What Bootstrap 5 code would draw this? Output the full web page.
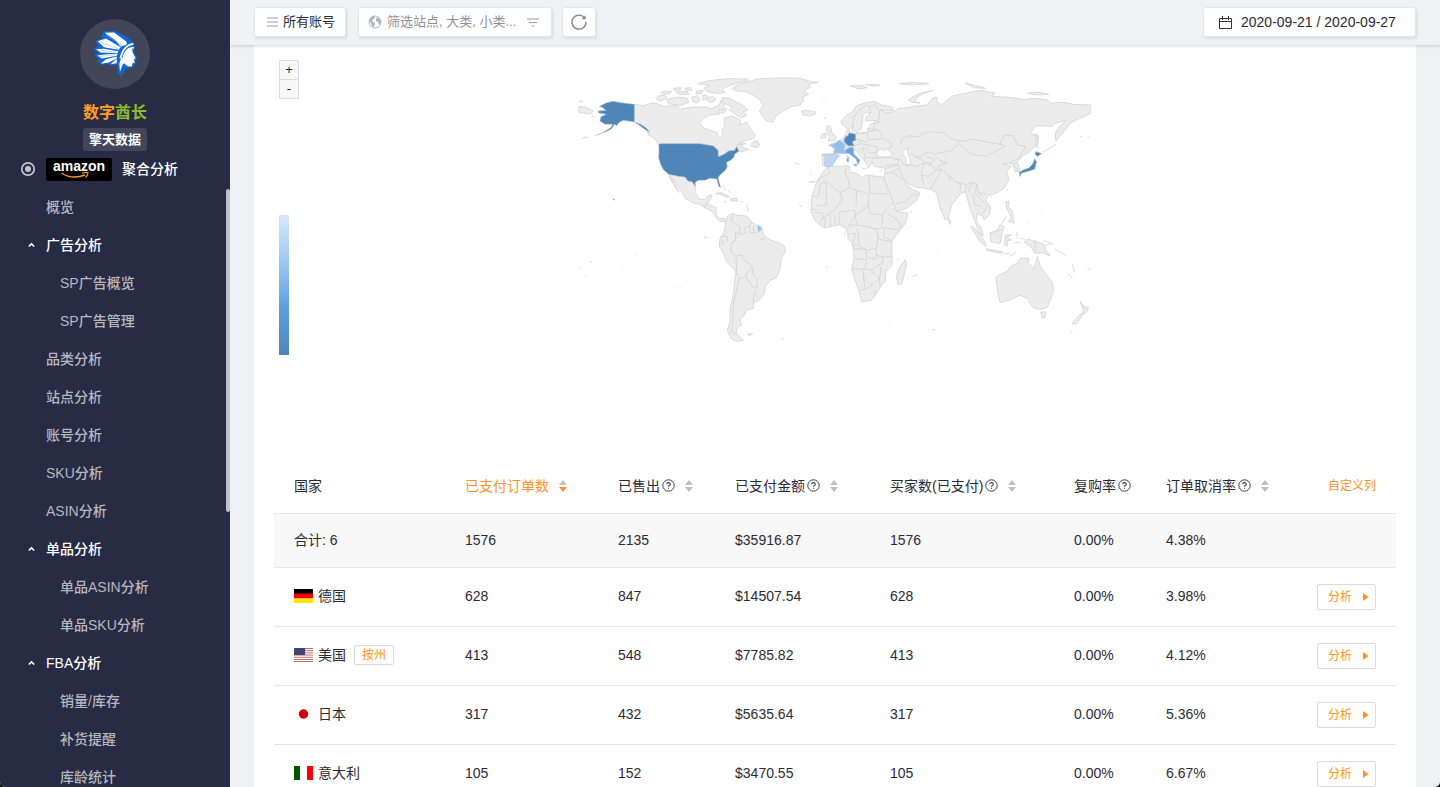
<!DOCTYPE html>
<html lang="zh-CN">
<head>
<meta charset="utf-8">
<meta name="viewport" content="width=device-width, initial-scale=1">
<title>数字酋长</title>
<link href="https://cdn.jsdelivr.net/npm/bootstrap@5.3.0/dist/css/bootstrap.min.css" rel="stylesheet">
<style>
:root{--ink:#2b2b35;--accent:#ff9226;--side:#282b44;--page:#f0f1f5;--line:#e6e6e6}
body{background:#000;color:var(--ink);font-family:"Liberation Sans","Noto Sans CJK SC",sans-serif;font-size:14px;line-height:20px}
.shell{height:100vh;border-radius:0 0 5px 5px;background:var(--page)}
.side{width:230px;background:var(--side)}
.side-scroll{right:0;top:24%;width:4px;height:41%;border-radius:2px;background:#c3c3c7}
.logo{width:70px;height:70px;background:#434559;margin-top:19px}
.brand-name{font-size:16px;line-height:24px;margin-top:12px;color:#ff9f23}
.brand-name span{color:#8fba30}
.tagline{background:#434559;border-radius:3px;line-height:23px;font-size:13px;width:64px;margin-top:3px}
.side nav{margin-top:-1px}
.side .nav-link{height:38px;padding:0 0 0 20px;color:#b7b8bf;font-weight:500;white-space:nowrap}
.side .nav-link.head{color:#fff}
.side .nav-link .ico{width:26px;flex:none;display:flex;align-items:center}
.side .nav-link.sub{padding-left:60px}
.side .nav-link.plain{padding-left:46px}
.amazon{background:#000;border-radius:2px;flex:none;margin-right:10px}
.topbar{height:45px;background:var(--page);padding:0 24px 1px;box-shadow:0 1px 3px rgba(0,0,0,.16);z-index:2}
.tool{height:30px;background:#fff;border:1px solid #e6e6ea;border-radius:3px;color:var(--ink);font-size:13px;line-height:20px;box-shadow:1px 2px 3px rgba(0,0,0,.09)}
.accounts{padding:0 10px 0 12px;margin-right:12px}
.filter{width:194px;padding:0 12px 0 9px;margin-right:10px}
.filter input{border:0;outline:0;background:none;min-width:0;color:#8e8f98;padding:0 0 0 5px;text-overflow:ellipsis}
.filter input::placeholder{color:#8e8f98;opacity:1}
.dates{font-size:14px;width:213px;padding:0 15px;gap:9px}
.sheet{margin:0 24px;padding:0 20px;background:#fff}
.map-panel{height:414px;padding-top:20px}
.map-panel svg{width:530px;height:290px;max-width:100%}
.zoomer{left:5px;top:15px;width:20px}
.zoomer button{height:20px;background:#f7f7f7;border:1px solid #ddd;padding:0;font-size:13px;line-height:18px;color:#222;border-radius:1px}
.zoomer button+button{border-top:0;height:19px}
.scale-bar{left:5px;top:170px;width:10px;height:140px;background:linear-gradient(#d6e9fb,#92c0ee 40%,#5ea0dd 65%,#4f86ba)}
.stats{table-layout:fixed;color:var(--ink);margin:0}
.stats th,.stats td{padding:0 0 0 20px;font-weight:400;border-bottom:1px solid var(--line);background:none;vertical-align:middle;white-space:nowrap;color:var(--ink);box-shadow:none}
.stats tr>:last-child{padding-right:20px;text-align:right}
.stats thead th{height:54px}
.stats .total td{height:54px;background:#f7f7f7}
.stats .data td{height:59px;padding-bottom:2px}
.stats th button{border:0;background:none;padding:0;color:inherit}
.stats th .customize{font-size:12px}
.stats .accent{color:var(--accent)}
.stats .help{margin-left:2px;margin-right:10px}
.outline{border:1px solid #dcdcdc;border-radius:2px;background:#fff;color:var(--accent);font-size:12px;line-height:18px}
.state{padding:0 7px}
.go{width:59px;height:26px;padding:0 6px 0 10px;margin-top:2px}
.flag{width:19px;height:14px;flex:none;margin-right:5px}
</style>
</head>
<body>
<svg width="0" height="0" class="position-absolute" aria-hidden="true">
<symbol id="q" viewBox="0 0 13 13"><circle cx="6.500" cy="6.500" r="5.700" fill="none" stroke="#3d3d47"/><path d="M4.700 5.300Q4.700 3.600 6.500 3.600T8.300 5.200Q8.300 6 7.300 6.500Q6.500 6.900 6.500 7.800M6.500 8.700V9.800" fill="none" stroke="#3d3d47" stroke-width="1.100"/></symbol>
<symbol id="sort" viewBox="0 0 8 12"><path d="M0 5L4 0L8 5Z" fill="#c0c0c4"/><path d="M0 7H8L4 12Z" fill="var(--down,#c0c0c4)"/></symbol>
<symbol id="up" viewBox="0 0 9 6"><path d="M1 5L4.500 1.500L8 5" fill="none" stroke="#fff" stroke-width="2"/></symbol>
<symbol id="play" viewBox="0 0 6 8"><path d="M0 0L5.500 4L0 8Z" fill="#ff9226"/></symbol>
</svg>
<div class="shell d-flex overflow-hidden">
<aside class="side position-relative flex-shrink-0 overflow-hidden">
 <div class="d-flex flex-column align-items-center">
  <div class="logo rounded-circle d-flex align-items-center justify-content-center">
   <svg width="50" height="52" viewBox="270 85 150 155" aria-hidden="true">
    <path d="M308 95L343 93L374 108L399 126L404 140L402 156L412 176L406 182L408 192L400 196L400 204L382 206L374 212L372 224L366 219L362 232L357 220L352 222L352 194L334 198L322 192L300 196L304 187L290 188L296 176L284 168L293 158L280 147L294 138L286 122L303 118Z" fill="#1268cf"/>
    <g fill="#fff"><path d="M314 99L342 98L378 124L382 134L362 140L345 120Z"/><path d="M293 124L318 116L362 142L356 150L312 142Z"/><path d="M288 148L312 147L355 154L352 160L302 158Z"/><path d="M292 167L320 163L353 162L350 168L306 176Z"/><path d="M302 192L318 178L350 170L350 176L326 188Z"/><path d="M332 193L346 180L351 178L350 190Z"/><path d="M382 146L396 144L398 158L407 175L402 178L404 189L397 191L396 199L384 200L372 190L366 198L360 216L358 190L364 174L378 158Z"/></g>
    <path d="M318 105L364 134M300 127L354 146M298 151L348 157M300 170L346 164" stroke="#8fc2f4" stroke-width="2" fill="none"/>
    <path d="M396 127Q365 134 356 176M402 138Q376 138 366 174" stroke="#1268cf" stroke-width="3" fill="none"/>
    <path d="M400 132Q370 136 361 176M402 144Q380 142 370 170" stroke="#fff" stroke-width="5" fill="none"/>
   </svg>
  </div>
  <div class="brand-name fw-bold">数字<span>酋长</span></div>
  <div class="tagline text-white fw-bold text-center">擎天数据</div>
 </div>
 <nav class="nav flex-column flex-nowrap">
  <a href="#" class="nav-link head d-flex align-items-center"><span class="ico"><svg width="16" height="16" viewBox="0 0 16 16"><circle cx="8" cy="8" r="6.200" fill="none" stroke="#c3c4cc" stroke-width="1.700"/><circle cx="8" cy="8" r="3" fill="#c3c4cc"/></svg></span><svg class="amazon" width="66" height="23" viewBox="0 0 66 23"><text x="7" y="13" font-family="Liberation Sans" font-weight="700" font-size="14" fill="#fff">amazon</text><path d="M15.500 15Q26 22 39 17" fill="none" stroke="#f7982a" stroke-width="1.500"/><path d="M36 15.200Q40 13.800 42 14.800Q41.500 18 39.500 19.500" fill="none" stroke="#f7982a" stroke-width="1.200"/></svg>聚合分析</a>
  <a href="#" class="nav-link plain d-flex align-items-center">概览</a>
  <a href="#" class="nav-link head d-flex align-items-center"><span class="ico"><svg class="ms-2" width="7" height="6"><use href="#up"/></svg></span>广告分析</a>
  <a href="#" class="nav-link sub d-flex align-items-center">SP广告概览</a>
  <a href="#" class="nav-link sub d-flex align-items-center">SP广告管理</a>
  <a href="#" class="nav-link plain d-flex align-items-center">品类分析</a>
  <a href="#" class="nav-link plain d-flex align-items-center">站点分析</a>
  <a href="#" class="nav-link plain d-flex align-items-center">账号分析</a>
  <a href="#" class="nav-link plain d-flex align-items-center">SKU分析</a>
  <a href="#" class="nav-link plain d-flex align-items-center">ASIN分析</a>
  <a href="#" class="nav-link head d-flex align-items-center"><span class="ico"><svg class="ms-2" width="7" height="6"><use href="#up"/></svg></span>单品分析</a>
  <a href="#" class="nav-link sub d-flex align-items-center">单品ASIN分析</a>
  <a href="#" class="nav-link sub d-flex align-items-center">单品SKU分析</a>
  <a href="#" class="nav-link head d-flex align-items-center"><span class="ico"><svg class="ms-2" width="7" height="6"><use href="#up"/></svg></span>FBA分析</a>
  <a href="#" class="nav-link sub d-flex align-items-center">销量/库存</a>
  <a href="#" class="nav-link sub d-flex align-items-center">补货提醒</a>
  <a href="#" class="nav-link sub d-flex align-items-center">库龄统计</a>
 </nav>
 <div class="side-scroll position-absolute"></div>
</aside>
<main class="flex-grow-1 overflow-hidden">
 <header class="topbar d-flex align-items-center position-relative">
  <button class="tool accounts d-flex align-items-center"><svg class="me-1" width="12" height="10" viewBox="0 0 12 10"><path d="M0 1H11M0 5H11M0 9H11" stroke="#999aa3"/></svg>所有账号</button>
  <div class="tool filter d-flex align-items-center">
   <svg class="flex-shrink-0" width="14" height="14" viewBox="0 0 14 14"><circle cx="7" cy="7" r="6" fill="#fff" stroke="#b4b5bb"/><path d="M2 3L5 1L7 2L6 4L4 5L5 7L7 8L6 12L4 11L3 8L1 6ZM9 2L12 4L13 8L11 10L10 7L8 6L8 4Z" fill="#b4b5bb"/></svg>
   <input class="flex-grow-1" type="text" aria-label="筛选" placeholder="筛选站点, 大类, 小类...">
   <svg class="flex-shrink-0 ms-2" width="12" height="9" viewBox="0 0 12 9"><path d="M0 1H12M2 4.500H10M4.500 8H7.500" stroke="#999aa3" stroke-width="1.200"/></svg>
  </div>
  <button class="tool px-2 d-flex align-items-center" aria-label="刷新"><svg width="16" height="16" viewBox="0 0 16 16"><path d="M13.800 4.200A7 7 0 1 0 15 8" fill="none" stroke="#85868f" stroke-width="1.400"/><path d="M14.600 1.200V5.200H10.400Z" fill="#85868f"/></svg></button>
  <button class="tool dates d-flex align-items-center ms-auto"><svg width="13" height="13" viewBox="0 0 13 13"><path d="M.500 2.500H12.500V12.500H.500ZM.500 5.500H12.500M3.500 0V4M9.500 0V4" fill="none" stroke="#33333d"/></svg>2020-09-21 / 2020-09-27</button>
 </header>
 <section class="sheet">
  <div class="map-panel position-relative d-flex justify-content-center align-items-start">
   <div class="zoomer position-absolute d-flex flex-column"><button aria-label="放大">+</button><button aria-label="缩小">-</button></div>
   <div class="scale-bar position-absolute"></div>
   <svg viewBox="0 0 1590 870" role="img" aria-label="世界地图" fill="#ececec" stroke="#d4d4d4" stroke-width="2.500" stroke-linejoin="round">
    <!-- North America, Greenland, Iceland -->
    <g>
     <path d="M193 118L222 122L245 114L262 116L280 124L320 122L330 132L372 126L410 126L425 132L432 126L448 120L452 108L470 110L458 132L446 148L420 150L398 160L390 172L396 186L420 196L440 202L448 222L458 212L456 196L464 180L462 160L486 152L512 166L508 180L530 172L545 196L556 208L552 220L520 228L500 242L520 234L514 246L536 252L518 260L507 258L500 245L494 256L476 258L462 268L445 275L444 256L430 243L415 240L390 236L273 236L266 238L250 218L236 210L228 192L212 178L193 171Z"/>
     <path d="M548 232L560 226L570 240L562 248L540 242ZM456 98L480 100L500 112L520 122L534 136L520 140L530 152L512 158L488 142L478 134L488 126L470 118L456 108ZM290 104L320 96L352 100L356 112L330 122L296 116ZM262 94L284 90L290 100L272 108L260 104ZM272 82L286 78L304 80L300 86L280 88ZM310 70L334 68L330 76L312 76ZM318 82L348 78L358 88L330 88ZM344 70L362 68L366 76L350 78ZM384 56L410 48L470 41L530 42L536 47L500 54L472 64L455 76L466 82L440 86L412 80L402 70L418 62ZM366 96L384 92L390 104L380 114L368 110ZM396 90L410 90L412 102L400 106ZM412 98L428 94L438 102L428 112L414 110ZM380 78L400 76L394 86L378 86ZM446 136L470 130L464 142L444 146ZM506 232L528 236L512 240Z"/>
     <path d="M486 70L505 58L540 50L560 42L640 38L690 40L715 48L744 52L716 58L722 66L702 78L715 88L698 96L700 108L690 120L660 126L636 140L620 150L608 172L590 168L576 152L568 138L580 120L562 98L530 80L500 78ZM694 138L710 136L735 140L738 146L718 153L700 150Z"/>
     <path d="M27 124L50 128L70 138L60 148L40 144L27 142ZM27 108L38 109L30 111ZM36 220L54 216M64 152L74 155"/>
     <path d="M296 328L326 334L345 336L354 348L366 350L376 364L378 385L388 402L404 404L414 392L427 390L420 406L408 414L404 428L390 418L370 414L345 400L340 388L330 372L310 344L305 340L328 382L316 366L304 348ZM404 428L412 416L438 428L440 452L448 462L462 460L468 468L450 470L436 455L428 440ZM408 414L418 414M436 386L452 382L478 394L474 398L450 388ZM480 402L500 400L504 408L484 408ZM510 410H518M458 360L466 374M474 378L484 386M530 418L536 440M462 410L470 411"/>
     <path d="M676 294L688 298M718 352L736 350M688 418L694 426M760 110L764 109M766 159L768 160"/>
     <g fill="#4f86ba" stroke="#b7c6d4" stroke-width="1.500">
      <path d="M88 124L110 113L128 109L160 114L193 118L193 171L160 166L148 172L140 182L134 178L124 192L108 200L76 212L100 202L122 188L128 178L105 178L90 168L92 156L108 148L86 144L84 138L108 136L98 128Z"/>
      <path d="M193 171L212 178L228 188L240 202L226 194L210 182Z"/>
      <path d="M273 236L390 236L415 240L430 243L444 256L445 275L462 268L476 258L494 256L500 245L507 258L494 268L492 276L482 286L470 292L472 305L466 316L450 330L444 338L452 368L446 364L440 342L420 340L405 346L385 346L376 352L376 364L366 350L354 348L345 336L326 334L296 328L280 314L272 298L266 280L267 250L266 238Z"/>
      <path d="M130 400L134 404L130 406ZM115 388L118 390M123 392L126 394"/>
     </g>
    </g>
    <!-- South America and the Pacific islands -->
    <g transform="translate(0 375)">
     <path d="M466 92L475 76L490 70L498 76L530 78L545 96L562 106L576 112L580 132L592 144L606 152L628 158L644 170L646 186L634 206L630 236L620 262L598 274L586 290L582 312L564 334L550 340L552 354L530 360L520 380L510 386L514 406L502 412L498 430L520 450L500 454L484 446L472 420L480 396L480 360L490 310L498 250L494 240L472 218L460 190L448 168L450 146L462 128L466 110Z"/>
     <path fill="none" d="M490 72L484 90L494 102L508 106L510 130L496 128L496 152L484 160M450 140L470 138L474 150L456 164L458 150M484 160L494 152L508 132L524 130L526 112L538 108L540 128L560 128L576 118M545 96L538 108M552 106L550 126M484 160L482 184L498 198L516 196L520 208L540 222L548 236L530 248L528 262L508 266L500 250L498 198M548 236L550 254L562 266L562 288L550 292L528 262M562 288L552 310L566 322M552 310L550 340M508 266L500 300L490 340L488 400L484 426L498 432M580 140L572 148L590 150"/>
     <path d="M532 432L548 431L540 437ZM634 445L641 448M402 142L412 141M60 216L67 218M26 234H30M116 117L117 118M124 127L125 128M196 190L202 194M156 239L158 240M184 234L185 234M52 245L53 245M70 246L71 246M46 259L50 259M42 387L43 388M328 292L332 293M460 330L461 331M768 230L771 231"/>
     <path fill="#92c0ee" stroke="#b4cfe9" d="M564 106L575 116L566 126L563 116Z"/>
    </g>
    <!-- Europe, Asia and Africa -->
    <g transform="translate(690 0)">
     <path d="M124 166L136 154L160 138L170 122L200 112L225 110L245 120L275 126L280 136L262 138L240 134L258 144L280 140L290 134L300 128L310 130L345 124L380 120L398 100L410 96L412 112L425 120L440 106L460 92L490 86L540 76L585 84L575 94L640 98L672 104L700 100L740 104L752 114L790 112L820 118L872 120L872 146L858 152L838 160L810 174L798 192L780 214L768 228L766 206L778 184L800 166L790 168L765 176L755 184L710 182L690 204L716 214L712 236L694 256L670 272L652 290L660 316L646 322L640 300L628 294L610 296L634 304L620 320L626 344L612 370L590 384L565 392L556 404L572 426L568 450L552 465L546 452L530 446L530 470L542 486L550 512L538 504L524 466L510 430L496 380L482 385L455 420L444 460L436 465L420 428L410 384L392 372L345 366L325 356L312 342L326 366L340 374L360 384L350 406L320 430L290 440L270 395L252 345L256 310L222 304L216 290L205 310L196 290L180 270L166 254L148 262L118 266L105 290L78 306L68 302L66 268L100 266L102 250L86 240L112 230L130 220L134 212L142 196L138 186L132 182L124 176Z"/>
     <path fill="#fff" d="M230 264L240 252L254 256L262 250L280 270L264 276L234 276ZM308 256L326 248L322 262L330 280L332 300L318 298L318 280L308 268ZM188 150L200 142L212 142L198 156L196 168L222 166L238 170L212 178L206 188L200 202L168 206L180 196L186 180L188 162ZM148 190L158 186L156 200L148 206Z"/>
     <path fill="none" d="M158 194L160 160L176 136L198 120L208 126L212 142M208 126L226 120L238 136L238 160L222 172L222 190L240 200L248 220L276 234L272 248L258 252M166 206L168 206L202 204L206 224L200 232L166 220M202 190L222 194M206 200L232 196M206 224L248 222M160 242L182 236L204 240L232 246L230 262L206 264L200 248L180 252L176 260M190 252L196 276L218 280L222 276M180 236L176 226L166 222M196 276L192 288M218 280L252 276L294 282L296 298L256 302M74 268L74 302M130 220L138 238L136 250L160 244M120 226L132 232M300 240L306 222L324 212L360 216L366 206L400 200L434 204L450 220L476 226L470 244L452 258L430 262L400 266L380 262L360 276L346 274L330 264M476 226L490 230L516 222L556 230L600 238L616 244L580 262L560 274L516 268L490 248L476 236M600 238L614 210L640 212L652 240L678 244L664 266L660 276L630 294M330 300L350 304L370 294L396 300L410 316L420 300L440 294L416 284L404 270M346 274L366 286L390 296L404 282L380 276M282 282L302 284L310 300L330 304M296 298L300 320L312 342M256 310L280 304L296 298M256 326L276 322L296 310M276 322L310 344M370 294L364 330L372 360M364 330L384 334L410 316L424 312L440 326L472 350L496 360L516 352L530 358L536 384L560 386M424 312L410 340L392 372M450 334L446 342L482 358L480 380M500 362L496 380M516 352L504 380M530 358L526 384L544 404L562 424L548 446M520 386L524 420L546 424M536 384L548 392M288 416L320 410L332 392L356 388M640 300L652 290"/>
     <path d="M84 306L142 302L150 306L148 320L170 326L188 338L196 330L250 336L262 366L280 410L290 440L324 445L316 475L276 528L276 602L256 620L256 647L240 667L216 705L185 711L176 675L155 615L162 580L158 540L145 520L142 495L120 479L72 489L45 467L33 440L36 395L50 350L68 322Z"/>
     <path fill="none" d="M84 306L90 324L62 338L52 354M34 396L56 392L60 358L78 350L120 384L148 368L144 340L134 324L142 302M78 350L80 420L46 422M120 384L126 404L104 436L80 450M148 368L170 376L206 386V422L166 450M170 376L168 422M206 334L210 386H262M204 422L212 446L248 450L260 430L280 410M120 440L164 436L166 450L148 480L142 490M90 450L92 484M80 450L72 488M104 450L106 482M120 440L116 480M46 442L66 444L76 470M60 470L76 452M34 432L50 436M166 450L170 480L202 484L230 492L252 488L292 494M170 480L148 480M248 450L246 484M292 494L304 484L292 464L262 446M172 490L178 540L158 540M202 484L232 496L234 522L228 550L202 556L178 542M158 540L166 552L198 552L200 578L224 582L230 570L228 550M234 522L276 530M230 570L250 576L274 574M162 580L200 584L196 612L156 612M196 612L214 616L236 600L250 592L246 576M190 616L194 672L178 676M194 672L216 662L238 640L222 626L214 616M236 600L244 612L238 640L240 664M194 644L218 660M222 678L230 680L226 690L220 686ZM252 488V516L276 528M145 506L166 506L160 534"/>
     <path d="M80 182L92 184L96 204L110 216L104 226L84 228L88 214L80 198ZM64 208L78 204L78 218L62 220ZM326 104L344 92L370 82L398 76L370 86L350 98L344 110L360 114L334 112ZM150 62L190 62L202 68L176 72ZM196 58L240 60L220 64ZM298 56L340 52L386 56L340 60ZM496 54L530 62L556 70L520 68ZM684 84L720 82L746 88L706 90ZM708 206L714 220L712 250L706 236ZM730 260L768 238M646 304L656 322M620 378L624 372M570 400L574 396M186 310H200M238 318L248 316M28 352L46 350M840 213L846 215M864 216L870 217M72 160H78M30 326L34 328"/>
     <path fill="#92c0ee" stroke="#b4cfe9" d="M88 240L104 236L116 226L136 236L132 248L136 266L118 264L102 266L104 250Z"/>
     <path fill="#b7d8f5" stroke="#b7c9d9" d="M68 268L100 268L118 272L104 288L98 302L80 306L74 300L78 276Z"/>
     <path fill="#64a3de" stroke="#a3c3e0" d="M136 256L148 248L160 248V258L162 268L180 286L174 298L168 282L148 266L136 264ZM160 298L172 298L168 304ZM141 280L146 278V290L141 290ZM142 270L144 276"/>
     <path fill="#4f86ba" stroke="#8baccb" d="M136 216L144 212L148 204L166 208L166 226L156 230L162 242L144 242L132 228Z"/>
     <path fill="#4f86ba" stroke="#8baccb" d="M708 260L724 266L712 274L706 268ZM704 282L709 290L704 312L686 318L664 324L660 334L658 322L672 314L686 310L698 298Z"/>
    </g>
    <!-- Indian Ocean islands and Oceania -->
    <g transform="translate(690 375)">
     <path d="M316 208L320 222L306 280L294 284L290 262L294 240ZM587 262L600 254L622 244L632 228L648 222L662 204L688 206L684 218L702 236L712 200L722 232L740 254L758 280L760 306L742 352L722 358L702 354L690 340L684 326L660 316L630 330L600 338L596 320ZM722 366L738 366L734 384L726 384ZM840 334L852 350L866 354L858 368L846 374L850 358ZM842 372L846 380L828 402L816 402L822 392ZM684 148L706 154L730 162L738 180L750 198L728 188L706 190L690 168L672 156ZM706 154V190M734 168L756 160M570 128L588 124L600 104L612 110L606 134L600 160L574 156ZM570 128L606 120M512 108L528 118L556 156L558 170L536 150ZM558 176L610 186L606 190L562 182ZM616 136L634 134L620 142L634 150L622 152L622 168L614 166ZM618 34L628 34L626 54L636 60L642 100L626 94L634 82L620 54ZM604 104L620 78M446 86L454 96L448 104ZM614 190H628M628 200L648 186M650 126L652 148M660 144L674 148M764 176L780 188M784 186L796 198M732 152L760 162M816 222L824 248M804 252L818 264M862 240L872 234M338 260L352 254M290 206L298 210M330 67H338M396 418L406 420M418 440H420M412 181H415M340 166H342M680 97H684M722 62L724 63M778 100H780M644 158H660M134 134L138 120M80 230H83M264 406H266M324 403H326M812 427H816M824 437H827"/>
    </g>
   </svg>
  </div>
  <table class="table stats">
   <colgroup><col style="width:15.240%"><col style="width:13.640%"><col style="width:10.430%"><col style="width:13.810%"><col style="width:16.400%"><col style="width:8.200%"><col style="width:22.280%"></colgroup>
   <thead><tr>
    <th>国家</th>
    <th class="accent"><div class="d-flex align-items-center"><button class="accent">已支付订单数</button><svg class="ms-2" style="--down:#ff9226" width="12" height="12"><use href="#sort"/></svg></div></th>
    <th><div class="d-flex align-items-center">已售出<svg class="help" width="13" height="13"><use href="#q"/></svg><svg width="8" height="12"><use href="#sort"/></svg></div></th>
    <th><div class="d-flex align-items-center">已支付金额<svg class="help" width="13" height="13"><use href="#q"/></svg><svg width="8" height="12"><use href="#sort"/></svg></div></th>
    <th><div class="d-flex align-items-center">买家数(已支付)<svg class="help" width="13" height="13"><use href="#q"/></svg><svg width="8" height="12"><use href="#sort"/></svg></div></th>
    <th><div class="d-flex align-items-center">复购率<svg class="help" width="13" height="13"><use href="#q"/></svg></div></th>
    <th><div class="d-flex align-items-center">订单取消率<svg class="help" width="13" height="13"><use href="#q"/></svg><svg width="8" height="12"><use href="#sort"/></svg><button class="accent customize ms-auto">自定义列</button></div></th>
   </tr></thead>
   <tbody>
    <tr class="total"><td>合计: 6</td><td>1576</td><td>2135</td><td>$35916.87</td><td>1576</td><td>0.00%</td><td class="text-start">4.38%</td></tr>
    <tr class="data"><td><div class="d-flex align-items-center"><svg class="flag" viewBox="0 0 19 14"><path d="M0 0H19V5H0Z"/><path fill="#f00" d="M0 4.500H19V9.500H0Z"/><path fill="#ffe600" d="M0 9.500H19V14H0Z"/></svg>德国</div></td><td>628</td><td>847</td><td>$14507.54</td><td>628</td><td>0.00%</td><td><div class="d-flex align-items-center justify-content-between">3.98%<button class="outline go d-flex align-items-center justify-content-between">分析<svg width="6" height="8"><use href="#play"/></svg></button></div></td></tr>
    <tr class="data"><td><div class="d-flex align-items-center"><svg class="flag" viewBox="0 0 19 14"><path fill="#fff" d="M0 0H19V14H0Z"/><path d="M0 .500H19M0 2.700H19M0 4.900H19M0 7.100H19M0 9.300H19M0 11.500H19M0 13.500H19" stroke="#bd6f68"/><path fill="#3c4672" d="M0 0H11V7H0Z"/></svg>美国<button class="outline ms-2 state">按州</button></div></td><td>413</td><td>548</td><td>$7785.82</td><td>413</td><td>0.00%</td><td><div class="d-flex align-items-center justify-content-between">4.12%<button class="outline go d-flex align-items-center justify-content-between">分析<svg width="6" height="8"><use href="#play"/></svg></button></div></td></tr>
    <tr class="data"><td><div class="d-flex align-items-center"><svg class="flag" viewBox="0 0 19 14"><circle cx="9.500" cy="7" r="4.700" fill="#d30000"/></svg>日本</div></td><td>317</td><td>432</td><td>$5635.64</td><td>317</td><td>0.00%</td><td><div class="d-flex align-items-center justify-content-between">5.36%<button class="outline go d-flex align-items-center justify-content-between">分析<svg width="6" height="8"><use href="#play"/></svg></button></div></td></tr>
    <tr class="data"><td><div class="d-flex align-items-center"><svg class="flag" viewBox="0 0 19 14"><path fill="#005700" d="M0 0H6V14H0Z"/><path fill="#f00" d="M13 0H19V14H13Z"/></svg>意大利</div></td><td>105</td><td>152</td><td>$3470.55</td><td>105</td><td>0.00%</td><td><div class="d-flex align-items-center justify-content-between">6.67%<button class="outline go d-flex align-items-center justify-content-between">分析<svg width="6" height="8"><use href="#play"/></svg></button></div></td></tr>
   </tbody>
  </table>
 </section>
</main>
</div>
<script src="https://cdn.jsdelivr.net/npm/bootstrap@5.3.0/dist/js/bootstrap.bundle.min.js"></script>
</body>
</html>
